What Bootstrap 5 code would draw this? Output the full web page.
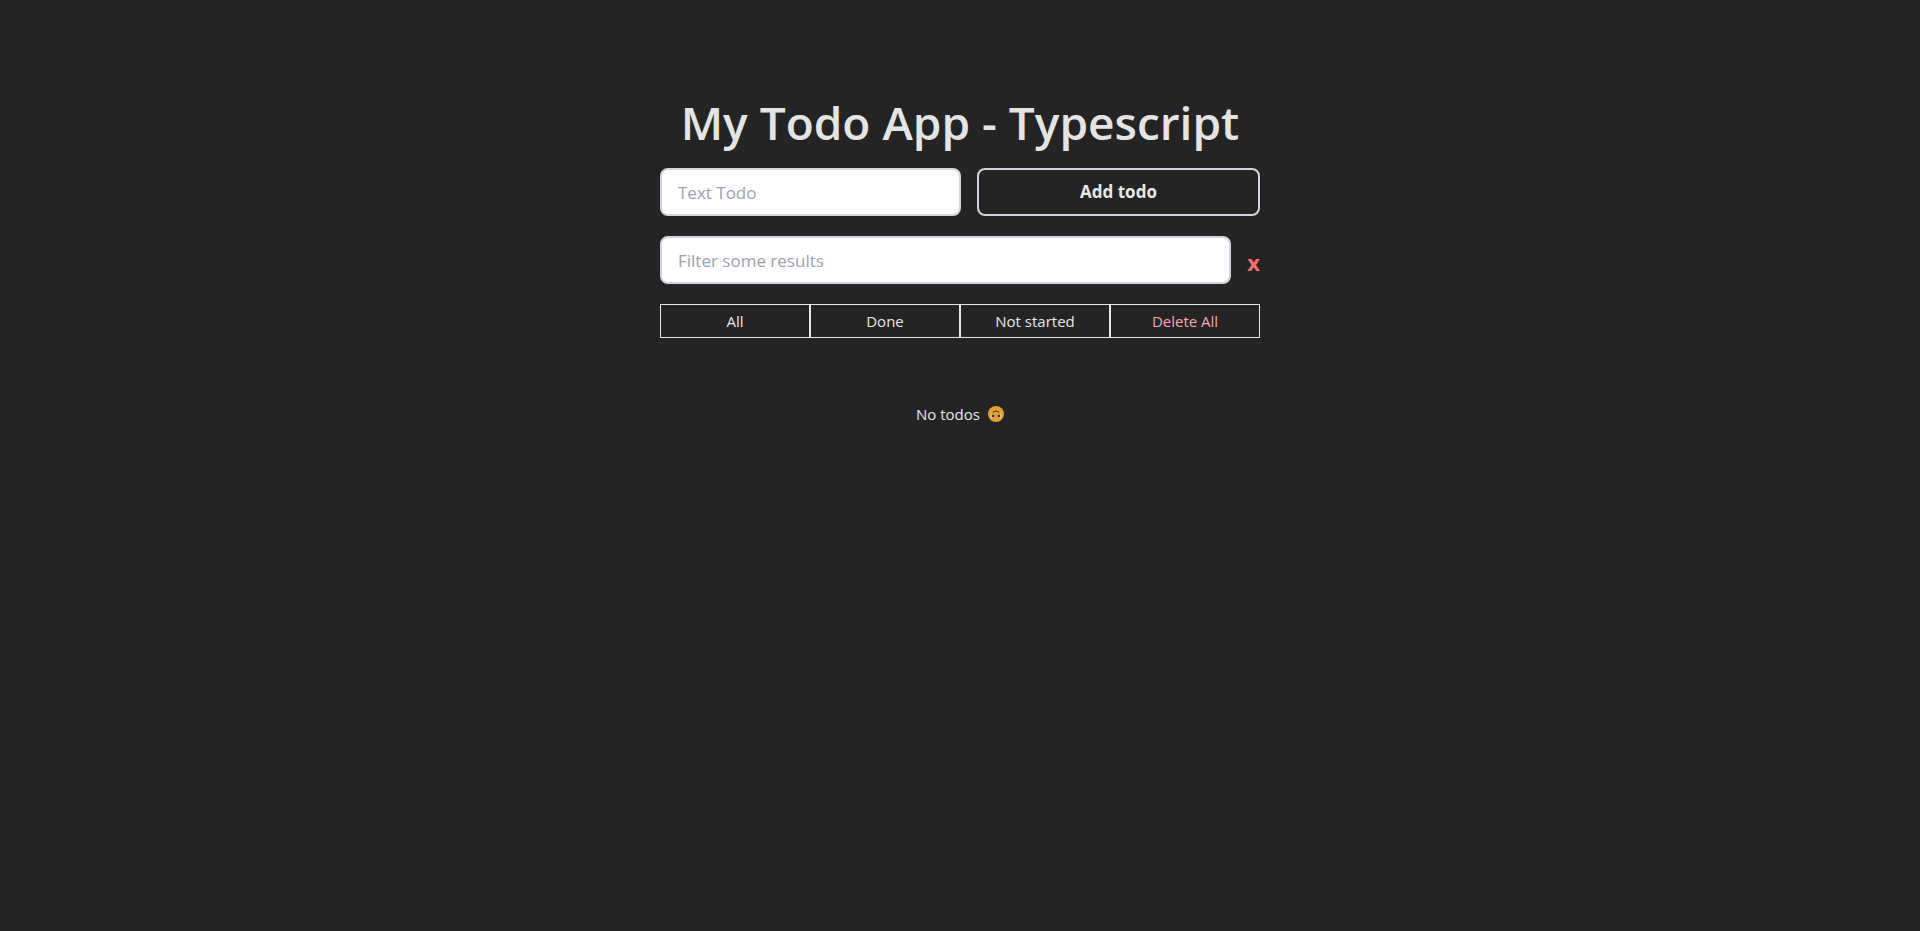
<!DOCTYPE html>
<html lang="en" data-bs-theme="dark">
<head>
<meta charset="utf-8">
<meta name="viewport" content="width=device-width, initial-scale=1">
<title>My Todo App - Typescript</title>
<link href="https://cdn.jsdelivr.net/npm/bootstrap@5.3.0/dist/css/bootstrap.min.css" rel="stylesheet">
<style>
body { background: #242424; color: #e8e8e8; font-family: "Open Sans", "Noto Sans", sans-serif; font-size: 15px; line-height: 24px; }
.todo-app { max-width: 600px; padding-top: 92px; }
.app-title { font-size: 46px; line-height: 60px; font-weight: 600; color: #e4e4e4; margin-bottom: 16px; }
.todo-input, .todo-input:focus { height: 48px; padding: 0 16px; font-size: 17px; color: #242424; background: #fff; border: 2px solid #d1d5db; border-radius: 8px; }
.todo-input::placeholder { color: #9ca3af; }
.add-form { display: grid; grid-template-columns: 301fr 283fr; }
.filter-row { margin: 20px 0; }
.btn-add { height: 48px; font-size: 17px; font-weight: 700; padding: 0; color: #e8e8e8; border: 2px solid #d1d5db; border-radius: 8px; }
.btn-clear { font-size: 22px; line-height: 24px; font-weight: 700; color: #f87171; }
.btn-tab { flex: 1 1 0; height: 34px; padding: 0; font-size: 15px; line-height: 24px; color: #e8e8e8; border: 1px solid #e5e7eb; border-radius: 0; }
.btn-delete { color: #fca5a5; }
.empty-note { margin-top: 64px; }
</style>
</head>
<body>
<main class="todo-app container px-0">
  <h1 class="app-title text-center">My Todo App - Typescript</h1>
  <form class="add-form gap-3">
    <input type="text" class="form-control todo-input" placeholder="Text Todo" aria-label="Text Todo">
    <button type="button" class="btn btn-add">Add todo</button>
  </form>
  <div class="filter-row d-flex align-items-center gap-3">
    <input type="text" class="form-control todo-input" placeholder="Filter some results" aria-label="Filter some results">
    <button type="button" class="btn btn-clear border-0 p-0 pt-1" aria-label="Clear filter">x</button>
  </div>
  <div class="d-flex" role="group" aria-label="Filters">
    <button type="button" class="btn btn-tab">All</button>
    <button type="button" class="btn btn-tab">Done</button>
    <button type="button" class="btn btn-tab">Not started</button>
    <button type="button" class="btn btn-tab btn-delete">Delete All</button>
  </div>
  <p class="empty-note d-flex justify-content-center align-items-center gap-2 mb-0">No todos
    <svg width="16" height="16" viewBox="0 0 16 16" role="img" aria-label="Upside-down face">
      <circle cx="8" cy="8" r="8" fill="#e3a033"/>
      <path d="M5 6Q8 3.6 11 6" fill="none" stroke="#493526" stroke-width="1" stroke-linecap="round"/>
      <circle cx="4.5" cy="10" r="1.9" fill="#eee5dc"/><circle cx="11.5" cy="10" r="1.9" fill="#eee5dc"/>
      <circle cx="5" cy="10" r="1.4" fill="#40332f"/><circle cx="11" cy="10" r="1.4" fill="#40332f"/>
    </svg>
  </p>
</main>
<script src="https://cdn.jsdelivr.net/npm/bootstrap@5.3.0/dist/js/bootstrap.bundle.min.js"></script>
</body>
</html>
